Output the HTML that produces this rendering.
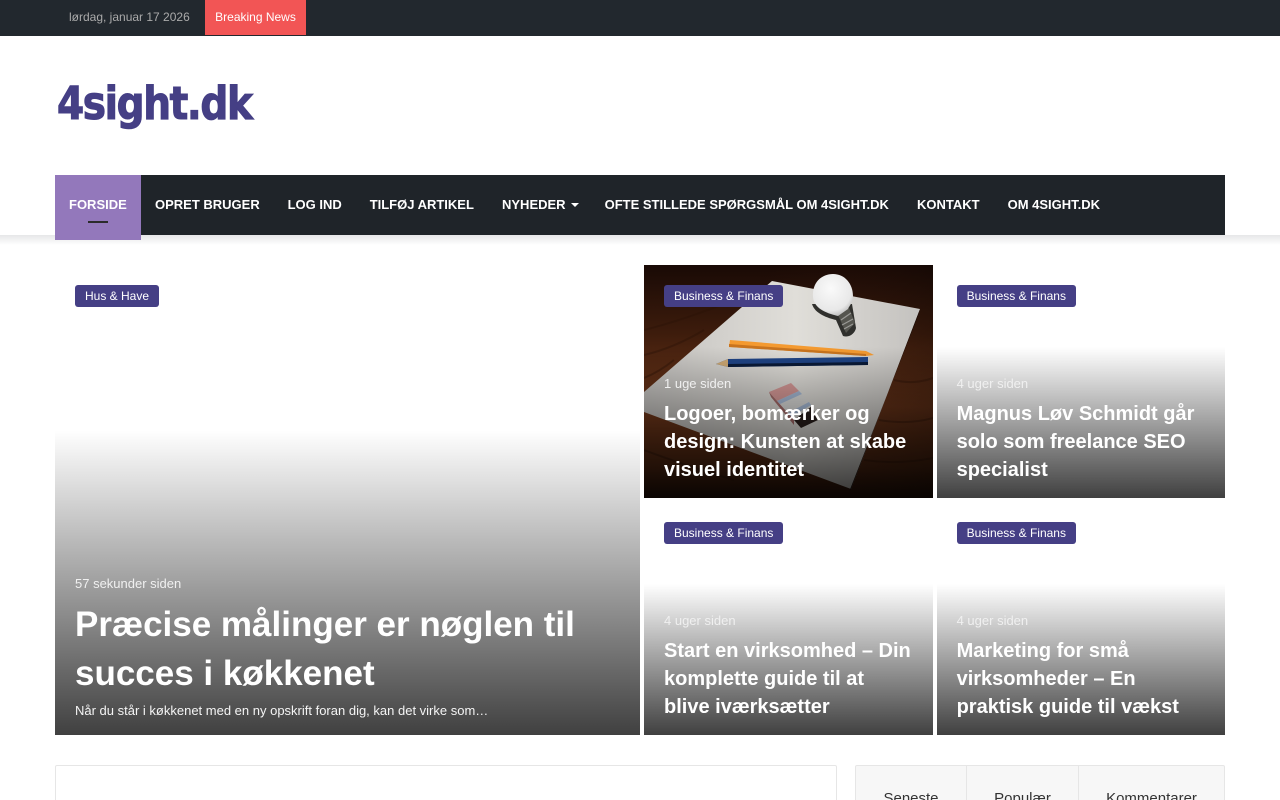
<!DOCTYPE html>
<html lang="da">
<head>
<meta charset="utf-8">
<title>4sight.dk</title>
<style>
*{box-sizing:border-box;margin:0;padding:0}
html,body{width:1280px;height:800px;overflow:hidden;background:#fff;font-family:"Liberation Sans",Arial,sans-serif}
#page{position:relative;width:1280px;height:800px;overflow:hidden;background:#fff}
.abs{position:absolute;white-space:nowrap}
#top{position:absolute;left:0;top:0;width:1280px;height:36px;background:#22282e}
#date{left:69px;top:10px;font-size:12px;line-height:15px;color:#aaa}
#brk{position:absolute;left:205px;top:0;width:101px;height:35px;background:#f25555;color:#fff;font-size:12px;line-height:35px;text-align:center}
#logo{left:56.5px;top:71.5px;font-family:"DejaVu Sans",sans-serif;font-weight:700;font-size:45px;line-height:64px;color:#453f85;letter-spacing:-1.6px;transform:scaleX(.868);transform-origin:0 50%;-webkit-text-stroke:1.1px #453f85}
#shadow{position:absolute;left:0;top:235px;width:1280px;height:10px;background:linear-gradient(#e6e7e8,#fff)}
#nav{position:absolute;left:55px;top:175px;width:1170px;height:60px;background:#1f2429}
#act{position:absolute;left:55px;top:175px;width:86px;height:65px;background:#9378bb}
#bar{position:absolute;left:88px;top:221px;width:20px;height:2px;background:#2b2b2b}
.n{position:absolute;top:197px;font-size:13px;line-height:15px;font-weight:700;color:#fff;white-space:nowrap}
#caret{position:absolute;left:571px;top:203px;width:0;height:0;border-left:4px solid transparent;border-right:4px solid transparent;border-top:4px solid #fff}
.t{position:absolute;overflow:hidden;background:#fff}
.ov{position:absolute;left:0;right:0;bottom:0;height:65%;background:linear-gradient(to bottom,rgba(0,0,0,0),rgba(0,0,0,.75))}
.tag{position:absolute;left:20px;top:20px;height:22px;padding:0 10px;background:#453f85;border-radius:3px;color:#fff;font-size:12px;line-height:22px;white-space:nowrap}
.d{position:absolute;left:20px;font-size:13px;line-height:16px;color:#f0f0f0;white-space:nowrap}
.h{position:absolute;left:20px;color:#fff;font-weight:700;font-size:20px;line-height:28px;white-space:nowrap}
#box1{position:absolute;left:55px;top:765px;width:782px;height:50px;border:1px solid #e6e6e6;border-radius:2px;background:#fff}
#tabs{position:absolute;left:855px;top:765px;width:370px;height:50px;border:1px solid #e6e6e6;border-radius:2px;background:#f7f7f7;font-size:15px;color:#333}
#tabs div{position:absolute;top:0;height:50px;line-height:66px;text-align:center;white-space:nowrap}
</style>
</head>
<body>
<div id="page">
<div id="top"></div>
<div id="date" class="abs">lørdag, januar 17 2026</div>
<div id="brk">Breaking News</div>
<div id="logo" class="abs">4sight.dk</div>

<div id="shadow"></div>
<div id="nav"></div>
<div id="act"></div>
<div id="bar"></div>
<div class="n" style="left:69px">FORSIDE</div>
<div class="n" style="left:155px">OPRET BRUGER</div>
<div class="n" style="left:287.6px">LOG IND</div>
<div class="n" style="left:369.7px">TILFØJ ARTIKEL</div>
<div class="n" style="left:502px">NYHEDER</div>
<div id="caret"></div>
<div class="n" style="left:604.6px">OFTE STILLEDE SPØRGSMÅL OM 4SIGHT.DK</div>
<div class="n" style="left:917px">KONTAKT</div>
<div class="n" style="left:1007.6px">OM 4SIGHT.DK</div>

<div class="t" style="left:55px;top:265px;width:585px;height:470px">
  <div class="ov"></div>
  <div class="tag">Hus &amp; Have</div>
  <div class="d" style="top:311px">57 sekunder siden</div>
  <div class="h" style="top:335px;font-size:35px;line-height:49px">Præcise målinger er nøglen til<br>succes i køkkenet</div>
  <div class="d" style="top:438px;color:#f4f4f4">Når du står i køkkenet med en ny opskrift foran dig, kan det virke som…</div>
</div>

<div class="t" style="left:644px;top:265px;width:289px;height:233px;background:#2a1208">
  <svg width="289" height="233" viewBox="0 5 289 233" style="position:absolute;left:0;top:0">
    <defs>
      <linearGradient id="w" x1="0" y1="0" x2="0" y2="1">
        <stop offset="0" stop-color="#160805"/><stop offset=".3" stop-color="#3d1c0c"/><stop offset=".6" stop-color="#73391b"/><stop offset=".85" stop-color="#552912"/><stop offset="1" stop-color="#241007"/>
      </linearGradient>
      <linearGradient id="wr" x1="0" y1="0" x2="1" y2="0">
        <stop offset="0" stop-color="#3f1e0e" stop-opacity="0"/><stop offset="1" stop-color="#0e0603" stop-opacity=".3"/>
      </linearGradient>
      <linearGradient id="p" x1="0" y1="0" x2="1" y2="0">
        <stop offset="0" stop-color="#c4c2bf"/><stop offset=".55" stop-color="#e0ded9"/><stop offset="1" stop-color="#c4c2bf"/>
      </linearGradient>
      <radialGradient id="b" cx=".45" cy=".35" r=".7">
        <stop offset="0" stop-color="#fafafa"/><stop offset=".75" stop-color="#e8e8e8"/><stop offset="1" stop-color="#b4b4b4"/>
      </radialGradient>
    </defs>
    <rect x="0" y="0" width="289" height="245" fill="url(#w)"/>
    <rect x="120" y="0" width="169" height="245" fill="url(#wr)"/>
    <g stroke="#2a1207" stroke-width="2" opacity=".4" fill="none">
      <path d="M0 70 Q40 60 90 40"/><path d="M0 95 Q30 88 60 70"/><path d="M0 118 Q15 112 30 100"/>
      <path d="M250 120 Q270 125 289 118"/><path d="M235 160 Q265 165 289 158"/><path d="M220 200 Q255 205 289 198"/>
      <path d="M0 190 Q40 205 90 220"/>
    </g>
    <polygon points="128,21 276,49 207,229 0,152 0,132" fill="url(#p)"/>
    <polygon points="276,49 207,229 205,232 274,56" fill="#1a0d07"/>
    <path d="M168 44 C171 54 184 58 192 60 L199 76 C206 78 211 73 212 68 L208 44Z" fill="#30302d"/>
    <path d="M194 55 L205 48 L211 63 L202 73 Z" fill="#55554f"/>
    <path d="M197 60 L207 53 M198 65 L209 59 M200 69 L209 64" stroke="#9a9a96" stroke-width="1.2"/>
    <path d="M169 37 C168 22 178 14 189 14 C201 14 209 24 209 36 C209 43 205 46 204 49 L194 56 C186 54 170 50 169 37Z" fill="url(#b)"/>
    <polygon points="86,80 222,91 230,95 222,96 85,87" fill="#f49a30"/>
    <polygon points="85,84 222,94 222,96 85,87" fill="#c9741e"/>
    <polygon points="84,99 224,97 224,105 84,107 72,104" fill="#1f4486"/>
    <polygon points="84,104 224,102 224,105 84,107" fill="#0a1a38"/>
    <polygon points="84,99 84,107 72,104" fill="#cda873"/>
    <polygon points="150,160 168,146 174,160 157,168" fill="#2a1f1c"/>
    <polygon points="125,132 147,123 168,145 150,160" fill="#dcdcda"/>
    <polygon points="125,132 147,123 155,131 133,141" fill="#d89a98"/>
    <polygon points="133,141 155,131 158,134 136,144" fill="#a8bcd8"/>
    <polygon points="144,153 165,142 167,145 147,157" fill="#a8bcd8"/>
    <polygon points="125,132 150,160 150,165 127,137" fill="#a36a68"/>
  </svg>
  <div class="ov"></div>
  <div class="tag">Business &amp; Finans</div>
  <div class="d" style="top:111px">1 uge siden</div>
  <div class="h" style="top:135px">Logoer, bomærker og<br>design: Kunsten at skabe<br>visuel identitet</div>
</div>

<div class="t" style="left:936.6px;top:265px;width:288.4px;height:233px">
  <div class="ov"></div>
  <div class="tag">Business &amp; Finans</div>
  <div class="d" style="top:111px">4 uger siden</div>
  <div class="h" style="top:135px">Magnus Løv Schmidt går<br>solo som freelance SEO<br>specialist</div>
</div>

<div class="t" style="left:644px;top:502px;width:289px;height:233px">
  <div class="ov"></div>
  <div class="tag">Business &amp; Finans</div>
  <div class="d" style="top:111px">4 uger siden</div>
  <div class="h" style="top:135px">Start en virksomhed – Din<br>komplette guide til at<br>blive iværksætter</div>
</div>

<div class="t" style="left:936.6px;top:502px;width:288.4px;height:233px">
  <div class="ov"></div>
  <div class="tag">Business &amp; Finans</div>
  <div class="d" style="top:111px">4 uger siden</div>
  <div class="h" style="top:135px">Marketing for små<br>virksomheder – En<br>praktisk guide til vækst</div>
</div>

<div id="box1"></div>
<div id="tabs">
  <div style="left:0;width:111px;border-right:1px solid #e6e6e6">Seneste</div>
  <div style="left:111px;width:112px;border-right:1px solid #e6e6e6">Populær</div>
  <div style="left:223px;width:145px">Kommentarer</div>
</div>
</div>
</body>
</html>
